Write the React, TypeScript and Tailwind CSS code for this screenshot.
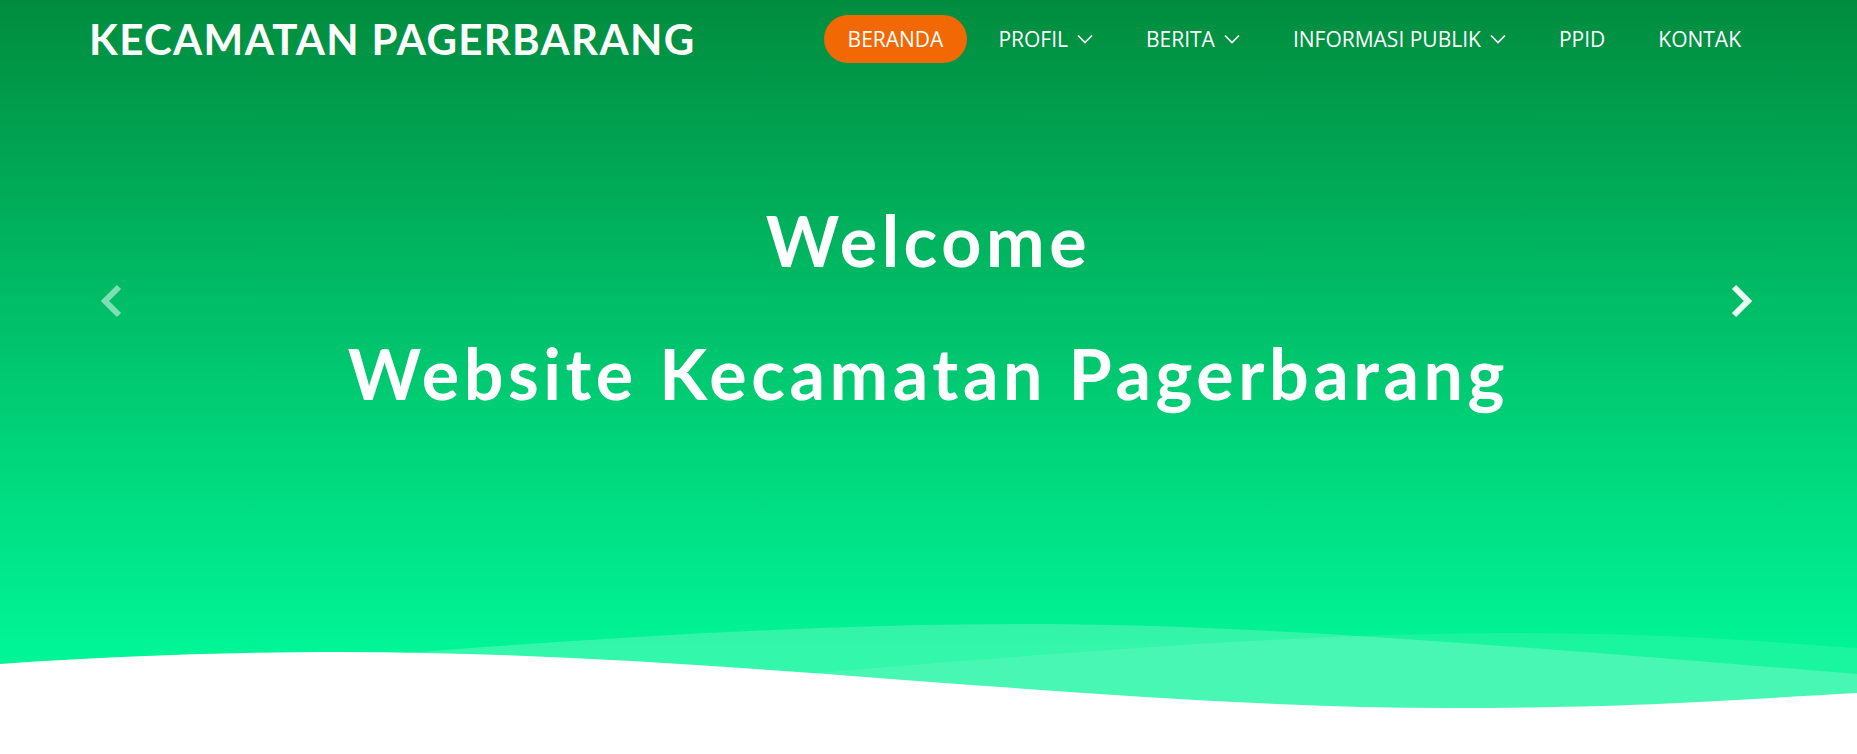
import React from "react";

function Chevron() {
  return (
    <svg width="16" height="10" viewBox="0 0 16 10" className="ml-[9px]" fill="none">
      <path d="M1 1.5 L8 8.5 L15 1.5" stroke="white" strokeWidth="1.6" />
    </svg>
  );
}

const items: { label: string; caret?: boolean; active?: boolean }[] = [
  { label: "BERANDA", active: true },
  { label: "PROFIL", caret: true },
  { label: "BERITA", caret: true },
  { label: "INFORMASI PUBLIK", caret: true },
  { label: "PPID" },
  { label: "KONTAK" },
];

export default function App() {
  return (
    <div className="w-full h-[754px] overflow-hidden bg-white">
      <section className="relative h-[754px] flex flex-col bg-[linear-gradient(180deg,#008c3e_0px,#00f596_650px)]">
        <header className="h-[78px] pl-[89px] pr-[92px] flex items-center justify-between">
          <div
            className="text-white font-bold text-[42px] leading-none tracking-[0.032em]"
            style={{ fontFamily: "Lato, 'Noto Sans', sans-serif" }}
          >
            KECAMATAN PAGERBARANG
          </div>
          <nav className="flex items-center gap-[9px] mr-[2px]" style={{ fontFamily: "'Open Sans', sans-serif" }}>
            {items.map((it) => (
              <a
                key={it.label}
                className={
                  "h-[48px] flex items-center rounded-full text-white text-[21px] leading-none " +
                  (it.active ? "bg-[#f26805] px-[24px]" : "px-[22px]")
                }
              >
                {it.label}
                {it.caret && <Chevron />}
              </a>
            ))}
          </nav>
        </header>

        <div
          className="flex flex-col items-center pt-[127px] gap-[63px] text-white font-bold text-[70px] leading-none tracking-[0.065em]"
          style={{ fontFamily: "Lato, 'Noto Sans', sans-serif" }}
        >
          <h2>Welcome</h2>
          <h2>Website Kecamatan Pagerbarang</h2>
        </div>

        <button className="absolute left-[98px] top-[283px] w-[28px] h-[40px] flex items-center justify-center">
          <svg width="24" height="38" viewBox="0 0 24 38" fill="none">
            <path d="M19 3 L5 17 L19 31" stroke="rgba(255,255,255,0.5)" strokeWidth="6" />
          </svg>
        </button>
        <button className="absolute left-[1727px] top-[283px] w-[28px] h-[40px] flex items-center justify-center">
          <svg width="24" height="38" viewBox="0 0 24 38" fill="none">
            <path d="M5 3 L19 17 L5 31" stroke="rgba(255,255,255,0.92)" strokeWidth="6" />
          </svg>
        </button>

        <svg
          className="mt-auto block w-full h-[144px]"
          viewBox="0 610 1857 144"
          preserveAspectRatio="none"
        >
          <path
            d="M0 740 C300 740 600 690 900 666 C1100 650 1300 634 1500 633 C1680 633 1780 643 1857 648 V754 H0 Z"
            fill="rgba(255,255,255,0.1)"
          />
          <path
            d="M0 690 C300 660 700 624 1022 624 C1250 624 1500 645 1857 674 V754 H0 Z"
            fill="rgba(255,255,255,0.2)"
          />
          <path
            d="M0 664 C110 656 230 652 340 652 C720 652 1100 708 1450 708 C1650 708 1760 698 1857 693 V754 H0 Z"
            fill="#ffffff"
          />
        </svg>
      </section>
    </div>
  );
}
